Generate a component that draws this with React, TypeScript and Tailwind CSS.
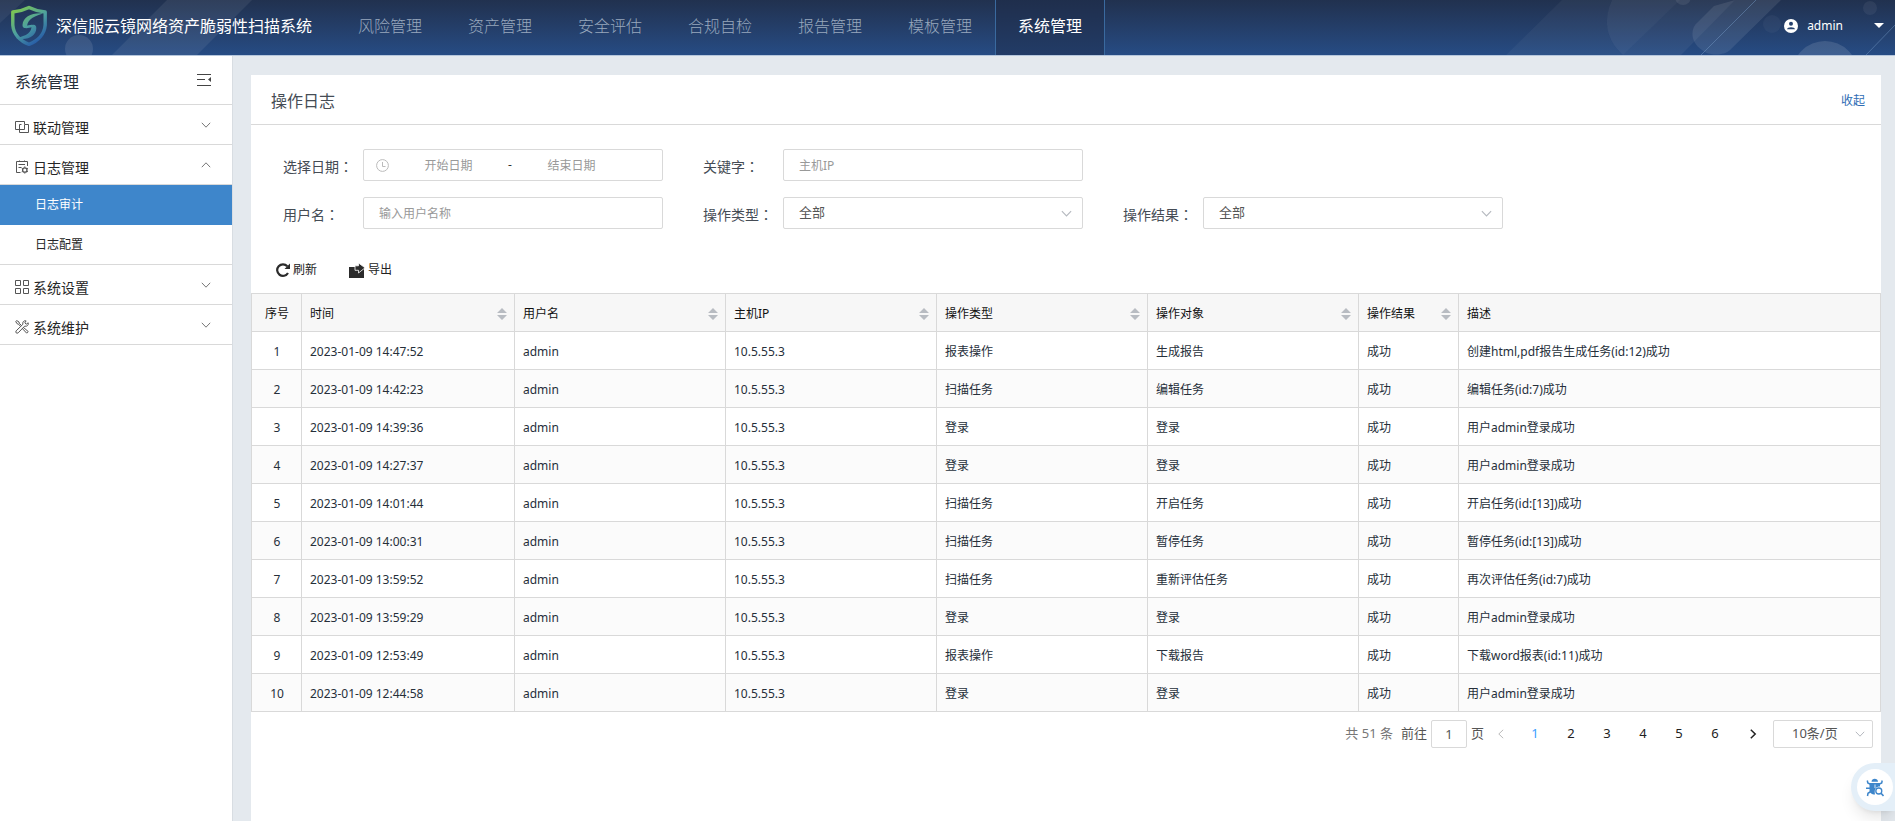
import type { ReactNode } from "react";

const NAV_ITEMS = [
  "风险管理",
  "资产管理",
  "安全评估",
  "合规自检",
  "报告管理",
  "模板管理",
  "系统管理",
];

interface LogRow {
  time: string;
  type: string;
  target: string;
  desc: string;
}

const LOGS: LogRow[] = [
  { time: "2023-01-09 14:47:52", type: "报表操作", target: "生成报告", desc: "创建html,pdf报告生成任务(id:12)成功" },
  { time: "2023-01-09 14:42:23", type: "扫描任务", target: "编辑任务", desc: "编辑任务(id:7)成功" },
  { time: "2023-01-09 14:39:36", type: "登录", target: "登录", desc: "用户admin登录成功" },
  { time: "2023-01-09 14:27:37", type: "登录", target: "登录", desc: "用户admin登录成功" },
  { time: "2023-01-09 14:01:44", type: "扫描任务", target: "开启任务", desc: "开启任务(id:[13])成功" },
  { time: "2023-01-09 14:00:31", type: "扫描任务", target: "暂停任务", desc: "暂停任务(id:[13])成功" },
  { time: "2023-01-09 13:59:52", type: "扫描任务", target: "重新评估任务", desc: "再次评估任务(id:7)成功" },
  { time: "2023-01-09 13:59:29", type: "登录", target: "登录", desc: "用户admin登录成功" },
  { time: "2023-01-09 12:53:49", type: "报表操作", target: "下载报告", desc: "下载word报表(id:11)成功" },
  { time: "2023-01-09 12:44:58", type: "登录", target: "登录", desc: "用户admin登录成功" },
];

const COLUMNS = [
  { title: "时间", width: "w-[213px]", sortable: true },
  { title: "用户名", width: "w-[211px]", sortable: true },
  { title: "主机IP", width: "w-[211px]", sortable: true },
  { title: "操作类型", width: "w-[211px]", sortable: true },
  { title: "操作对象", width: "w-[211px]", sortable: true },
  { title: "操作结果", width: "w-[100px]", sortable: true },
  { title: "描述", width: "", sortable: false },
];

function Chevron({ className }: { className: string }) {
  return (
    <svg viewBox="0 0 10 10" className={className} fill="none" stroke="currentColor" aria-hidden="true">
      <path d="M0.8 2.8 L5 7.2 L9.2 2.8" />
    </svg>
  );
}

function Logo() {
  return (
    <svg viewBox="0 0 38 42" className="h-[42px] w-[38px]" fill="none" aria-hidden="true">
      <defs>
        <linearGradient id="shield" x1="6" y1="4" x2="30" y2="38" gradientUnits="userSpaceOnUse">
          <stop offset="0" stopColor="#7cc653" />
          <stop offset="0.5" stopColor="#4c9fa0" />
          <stop offset="1" stopColor="#2456a8" />
        </linearGradient>
      </defs>
      <path
        d="M19 2.500 C14 5 8 6.500 2.800 7 L2.800 20 C3.500 29 10 36 19 39.300 C28 36 34.500 29 35.200 20 L35.200 7 C30 6.500 24 5 19 2.500 Z"
        stroke="url(#shield)"
        strokeWidth="3.400"
        strokeLinejoin="round"
      />
      <path
        d="M33 8.500 C22 7.500 13 12 12.500 20 C12.400 23 14.500 23.500 17 22.500 C17 17 20 12 33 8.500 Z"
        fill="url(#shield)"
      />
      <path
        d="M6 33 C17 31 22 27 21.500 20.500 C24 19 26.500 20 26.300 23.500 C26 31 17 36.500 6 33 Z"
        fill="url(#shield)"
      />
      <path d="M14.500 21.500 C18 23 20.500 19.500 24.500 21.500" stroke="url(#shield)" strokeWidth="2.600" />
    </svg>
  );
}

function HeaderPattern() {
  return (
    <div className="pointer-events-none absolute inset-0 flex justify-between overflow-hidden" aria-hidden="true">
      <svg viewBox="0 0 300 55" className="h-[55px] w-[300px]" fill="#ffffff">
        <path d="M167 0 H252 L197 55 H112 Z" fillOpacity="0.07" />
        <circle cx="79" cy="49" r="14" fillOpacity="0.1" />
        <path d="M0 0 H25 L0 23 Z" fillOpacity="0.06" />
      </svg>
      <svg viewBox="0 0 395 55" className="h-[55px] w-[395px]" fill="#ffffff">
        <path d="M62 0 H112 C104 18 104 38 123 55 H6 Z" fillOpacity="0.04" />
        <path d="M112 0 H180 L123 55 C104 38 104 18 112 0 Z" fillOpacity="0.08" />
        <path d="M180 0 H235 L181 55 H123 Z" fillOpacity="0.05" />
        <path d="M235 0 H281 L230 50 C224 56 208 56 202 50 C190 42 190 28 198 22 L214 6 Z" fillOpacity="0.09" />
        <circle cx="183" cy="-3" r="8" fillOpacity="0.08" />
        <circle cx="272" cy="24" r="9" fillOpacity="0.04" />
        <circle cx="370" cy="8" r="7" fillOpacity="0.06" />
        <circle cx="325" cy="74" r="33" fillOpacity="0.12" />
        <path d="M256 0 L201 55 M396 24 L366 55" stroke="#6f93bf" strokeOpacity="0.5" />
      </svg>
    </div>
  );
}

function Header() {
  return (
    <header className="relative flex h-14 shrink-0 items-center border-b border-[#b5c6dc] bg-linear-to-b from-[#21314f] to-[#264c84] text-white">
      <HeaderPattern />
      <div className="relative flex w-[335px] items-center gap-2 pb-1 pl-[10px]">
        <Logo />
        <h1 className="text-base whitespace-nowrap">深信服云镜网络资产脆弱性扫描系统</h1>
      </div>
      <nav className="relative flex h-full">
        {NAV_ITEMS.map((item) => (
          <a
            key={item}
            href="#"
            className={
              item === "系统管理"
                ? "flex w-[110px] items-center justify-center border-x border-[#3a6a9f] bg-[#1d2b4a]/50 pb-1 text-base"
                : "flex w-[110px] items-center justify-center pb-1 text-base font-light text-[#98a8bd]"
            }
          >
            {item}
          </a>
        ))}
      </nav>
      <button type="button" className="relative ml-auto flex items-center pr-[11px] pb-1 text-xs">
        <svg viewBox="0 0 14 14" className="mr-[9px] size-[14px]" aria-hidden="true">
          <circle cx="7" cy="7" r="7" fill="#fff" />
          <circle cx="7" cy="4.800" r="2" fill="#24406d" />
          <path d="M3 10.300 C3 7.400 11 7.400 11 10.300 Z" fill="#24406d" />
        </svg>
        <span className="mr-[31px]">admin</span>
        <svg viewBox="0 0 10 5" className="h-[5px] w-[10px]" fill="#fff" aria-hidden="true">
          <path d="M0 0 H10 L5 5 Z" />
        </svg>
      </button>
    </header>
  );
}

function LinkageIcon() {
  return (
    <svg viewBox="0 0 14 14" className="size-[14px]" fill="none" stroke="#555" aria-hidden="true">
      <path d="M4 9.500 H0.500 V1.500 H9.500 V4 M6.500 4.500 H4.500 V12.500 H13.500 V4.500 H9.500 V9.500 H4.500" />
    </svg>
  );
}

function LogIcon() {
  return (
    <svg viewBox="0 0 14 14" className="size-[14px]" fill="none" stroke="#555" aria-hidden="true">
      <path d="M5.500 12.500 H1.500 V1.500 H12.500 V6 M3.500 4.500 H10 M3.500 7.500 H6.500 M4.500 0.500 V2 M9.500 0.500 V2" />
      <circle cx="9.800" cy="10" r="2.200" strokeWidth="1.300" />
      <path d="M9.800 6.400 V7.600 M9.800 12.400 V13.600 M6.700 8.200 L7.700 8.800 M11.900 11.200 L12.900 11.800 M6.700 11.800 L7.700 11.200 M11.900 8.800 L12.900 8.200" />
    </svg>
  );
}

function GridIcon() {
  return (
    <svg viewBox="0 0 14 14" className="size-[14px]" fill="none" stroke="#555" aria-hidden="true">
      <path d="M0.500 0.500 H5.500 V5.500 H0.500 Z M8.500 0.500 H13.500 V5.500 H8.500 Z M0.500 8.500 H5.500 V13.500 H0.500 Z M8.500 8.500 H13.500 V13.500 H8.500 Z" />
    </svg>
  );
}

function ToolsIcon() {
  return (
    <svg viewBox="0 0 14 14" className="size-[14px]" fill="none" stroke="#555" aria-hidden="true">
      <path d="M0.700 1.500 L1.800 0.600 L4 2 L4.300 3.300 L6.600 5.600 M0.700 1.500 L2.200 3.800 L3.500 4.200 L5.600 6.400 M8.500 7.500 L13.200 11.500 L11.700 13.200 L7.500 8.700 Z" />
      <path d="M13.200 2.800 L11.200 4.200 L9.800 2.900 L11.100 0.900 C8.800 0.200 7.200 2.200 7.900 4.300 L1.200 10.800 C0 12.400 1.700 14 3.200 12.800 L9.700 6.100 C11.900 6.900 13.900 5 13.200 2.800 Z" />
    </svg>
  );
}

interface MenuSectionProps {
  icon: ReactNode;
  label: string;
  open?: boolean;
}

function MenuSection({ icon, label, open = false }: MenuSectionProps) {
  return (
    <button
      type="button"
      aria-expanded={open}
      className="flex h-10 w-full items-center border-b border-[#d9d9d9] pt-1 pr-[21px] pl-[15px] text-sm text-[#262626]"
    >
      {icon}
      <span className="ml-1 pt-0.5">{label}</span>
      <Chevron
        className={
          open
            ? "mb-1 ml-auto size-[10px] rotate-180 text-[#777]"
            : "mb-1 ml-auto size-[10px] text-[#777]"
        }
      />
    </button>
  );
}

function Sidebar() {
  return (
    <aside className="w-[233px] shrink-0 border-r border-[#d8dde2] bg-white">
      <div className="flex h-[49px] items-center justify-between border-b border-[#d9d9d9] pr-5 pl-[15px]">
        <h2 className="pt-1 text-base text-[#262f3a]">系统管理</h2>
        <button type="button" aria-label="收起菜单">
          <svg viewBox="0 0 15 12" className="h-3 w-[15px]" fill="none" stroke="#444" aria-hidden="true">
            <path d="M0 0.500 H14 M0 5.500 H8 M0 11.500 H14" />
            <path d="M14 3 V8 L11 5.500 Z" fill="#444" stroke="none" />
          </svg>
        </button>
      </div>
      <nav>
        <MenuSection icon={<LinkageIcon />} label="联动管理" />
        <MenuSection icon={<LogIcon />} label="日志管理" open />
        <a href="#" className="flex h-10 items-center bg-[#3e86cb] pl-[35px] text-xs text-white">
          日志审计
        </a>
        <a href="#" className="flex h-10 items-center border-b border-[#d9d9d9] pl-[35px] text-xs text-[#262626]">
          日志配置
        </a>
        <MenuSection icon={<GridIcon />} label="系统设置" />
        <MenuSection icon={<ToolsIcon />} label="系统维护" />
      </nav>
    </aside>
  );
}

interface FieldProps {
  id: string;
  label: string;
  children: ReactNode;
}

function Field({ id, label, children }: FieldProps) {
  return (
    <div className="flex w-[380px] items-center">
      <label htmlFor={id} className="w-20 shrink-0 pt-0.5 text-sm text-[#454c55]">
        {label}
        <span lang="zh-TW" className="font-['Noto_Sans_CJK_TC',sans-serif]">
          ：
        </span>
      </label>
      {children}
    </div>
  );
}

const boxClass =
  "h-8 w-full rounded-xs border border-[#d9d9d9] bg-white px-[15px] outline-none placeholder:text-[#999]";

const dateClass = "w-[119px] pt-0.5 text-center outline-none placeholder:text-[#999]";

function SelectBox({ id }: { id: string }) {
  return (
    <div className="relative w-full">
      <select id={id} className={`${boxClass} appearance-none text-[13px] text-[#555]`}>
        <option>全部</option>
      </select>
      <Chevron className="pointer-events-none absolute top-[11px] right-[11px] size-[11px] text-[#b5b9bf]" />
    </div>
  );
}

function FilterForm() {
  return (
    <form className="px-8 pt-6">
      <div className="flex flex-wrap gap-x-10 gap-y-4">
        <Field id="start" label="选择日期">
          <div className="flex h-8 w-full items-center rounded-xs border border-[#d9d9d9] px-3 text-xs">
            <svg viewBox="0 0 13 13" className="size-[13px] shrink-0" fill="none" stroke="#bbb" aria-hidden="true">
              <circle cx="6.500" cy="6.500" r="5.900" />
              <path d="M6.500 3 V7.500 H9.500" />
            </svg>
            <input id="start" placeholder="开始日期" className={dateClass} />
            <span className="w-1 text-center text-[#333]">-</span>
            <input aria-label="结束日期" placeholder="结束日期" className={dateClass} />
          </div>
        </Field>
        <Field id="keyword" label="关键字">
          <input id="keyword" placeholder="主机IP" className={`${boxClass} text-xs`} />
        </Field>
      </div>
      <div className="mt-4 flex flex-wrap gap-x-10 gap-y-4">
        <Field id="username" label="用户名">
          <input id="username" placeholder="输入用户名称" className={`${boxClass} text-xs`} />
        </Field>
        <Field id="type" label="操作类型">
          <SelectBox id="type" />
        </Field>
        <Field id="result" label="操作结果">
          <SelectBox id="result" />
        </Field>
      </div>
    </form>
  );
}

function Toolbar() {
  return (
    <div className="mt-6 flex h-10 items-center gap-8 pb-1.5 pl-[25px] text-xs text-[#222]">
      <button type="button" className="flex items-center gap-[3px]">
        <svg viewBox="0 0 14 14" className="size-[14px]" fill="none" stroke="#2b2b2b" aria-hidden="true">
          <path d="M12 10 A5.800 5.800 0 1 1 11.300 3.200" strokeWidth="2.200" />
          <path d="M14 0.500 V6 H8.500 Z" fill="#2b2b2b" stroke="none" />
        </svg>
        刷新
      </button>
      <button type="button" className="flex items-center gap-[3px]">
        <svg viewBox="0 0 16 15" className="h-[15px] w-4" fill="#2b2b2b" aria-hidden="true">
          <path d="M0 4 H15 V15 H0 Z" />
          <path
            d="M6 2.800 H9.500 V0 L16 4.800 L9.500 10 V7.300 H6 Z"
            stroke="#fff"
            strokeWidth="0.800"
          />
        </svg>
        导出
      </button>
    </div>
  );
}

function SortCaret() {
  return (
    <svg viewBox="0 0 10 12" className="h-3 w-[10px]" fill="#b8bcc2" aria-hidden="true">
      <path d="M5 0 L10 5 H0 Z M0 7 H10 L5 12 Z" />
    </svg>
  );
}

const cellClass = "border border-[#d9d9d9] pt-0.5 pr-[7px] pl-2";

function LogTable() {
  return (
    <table className="w-full table-fixed border-collapse text-xs text-[#262f3a]">
      <thead>
        <tr className="h-[38px] bg-[#f7f7f7] text-[#111]">
          <th className={`${cellClass} w-[50px] text-center font-normal`}>序号</th>
          {COLUMNS.map((col) => (
            <th key={col.title} className={`${cellClass} ${col.width} text-left font-normal`}>
              {col.sortable ? (
                <button type="button" className="flex w-full items-center justify-between">
                  {col.title}
                  <SortCaret />
                </button>
              ) : (
                col.title
              )}
            </th>
          ))}
        </tr>
      </thead>
      <tbody>
        {LOGS.map((log, index) => (
          <tr key={log.time} className="h-[38px] even:bg-[#fbfbfb]">
            <td className={`${cellClass} text-center`}>{index + 1}</td>
            {[log.time, "admin", "10.5.55.3", log.type, log.target, "成功", log.desc].map((value, i) => (
              <td key={i} className={cellClass}>
                {value}
              </td>
            ))}
          </tr>
        ))}
      </tbody>
    </table>
  );
}

function Pagination() {
  return (
    <div className="flex items-center justify-end pt-2 pr-2 text-[13px] text-[#555]">
      <span className="mr-2 text-[#777]">共 51 条</span>
      <label htmlFor="page">前往</label>
      <input
        id="page"
        defaultValue="1"
        className="mx-1 h-7 w-9 rounded-xs border border-[#d9d9d9] text-center outline-none"
      />
      <span>页</span>
      <button type="button" aria-label="上一页" className="flex w-[33px] justify-center text-[#bbb]">
        <Chevron className="size-[10px] rotate-90" />
      </button>
      <div className="flex text-[#222]">
        {[1, 2, 3, 4, 5, 6].map((page) => (
          <button key={page} type="button" className={page === 1 ? "w-9 text-[#409eff]" : "w-9"}>
            {page}
          </button>
        ))}
        <button type="button" aria-label="下一页" className="flex w-10 items-center justify-center">
          <Chevron className="size-[10px] -rotate-90 stroke-[1.500]" />
        </button>
      </div>
      <div className="relative">
        <select
          aria-label="每页条数"
          className="h-7 w-[100px] appearance-none rounded-xs border border-[#d9d9d9] pl-[18px] outline-none"
        >
          <option>10条/页</option>
        </select>
        <Chevron className="pointer-events-none absolute top-[9px] right-2 size-[10px] text-[#b5b9bf]" />
      </div>
    </div>
  );
}

function ScanButton() {
  return (
    <button
      type="button"
      aria-label="扫描"
      className="fixed right-0 bottom-[10px] flex h-12 items-center rounded-l-full bg-[#e4eff8] pr-[2px] pl-[6px] shadow-lg"
    >
      <span className="flex size-9 items-center justify-center rounded-full bg-white">
        <svg viewBox="0 0 18 19" className="h-[19px] w-[18px]" fill="none" stroke="#3e86cb" aria-hidden="true">
          <path d="M5.500 3.800 C5.500 -0.200 12 -0.200 12 3.800 Z" fill="#3e86cb" stroke="none" />
          <path d="M3.500 5 H14 V8.500 C10 8.500 8 11 9 16.500 C5.500 16.500 3.500 14.500 3.500 12 Z" fill="#3e86cb" stroke="none" />
          <path d="M9 6.500 V10" stroke="#fff" strokeWidth="0.800" />
          <path d="M1.300 2.500 L1.800 5 L4.500 6.200 M16.200 2.500 L15.700 5 L13 6.200 M0 10.200 H4 M1.500 18 L2 15.300 L4.800 13.500" strokeWidth="1.500" />
          <circle cx="12.800" cy="13" r="3" strokeWidth="1.300" fill="#fff" />
          <path d="M15 15.300 L17.500 18" strokeWidth="1.600" />
        </svg>
      </span>
    </button>
  );
}

export default function App() {
  return (
    <div className="flex min-h-screen flex-col bg-[#e4e9ee] font-['Noto_Sans','Noto_Sans_CJK_SC',sans-serif]">
      <Header />
      <div className="flex flex-1">
        <Sidebar />
        <main className="flex min-w-0 flex-1 flex-col pt-[19px] pr-[14px] pl-[18px]">
          <section className="flex-1 bg-white">
            <div className="flex h-[50px] items-center justify-between border-b border-[#d9d9d9] pt-0.5 pr-4 pl-5">
              <h2 className="text-base text-[#454c55]">操作日志</h2>
              <button type="button" className="text-xs text-[#2f6db5]">
                收起
              </button>
            </div>
            <FilterForm />
            <Toolbar />
            <LogTable />
            <Pagination />
          </section>
        </main>
      </div>
      <ScanButton />
    </div>
  );
}
